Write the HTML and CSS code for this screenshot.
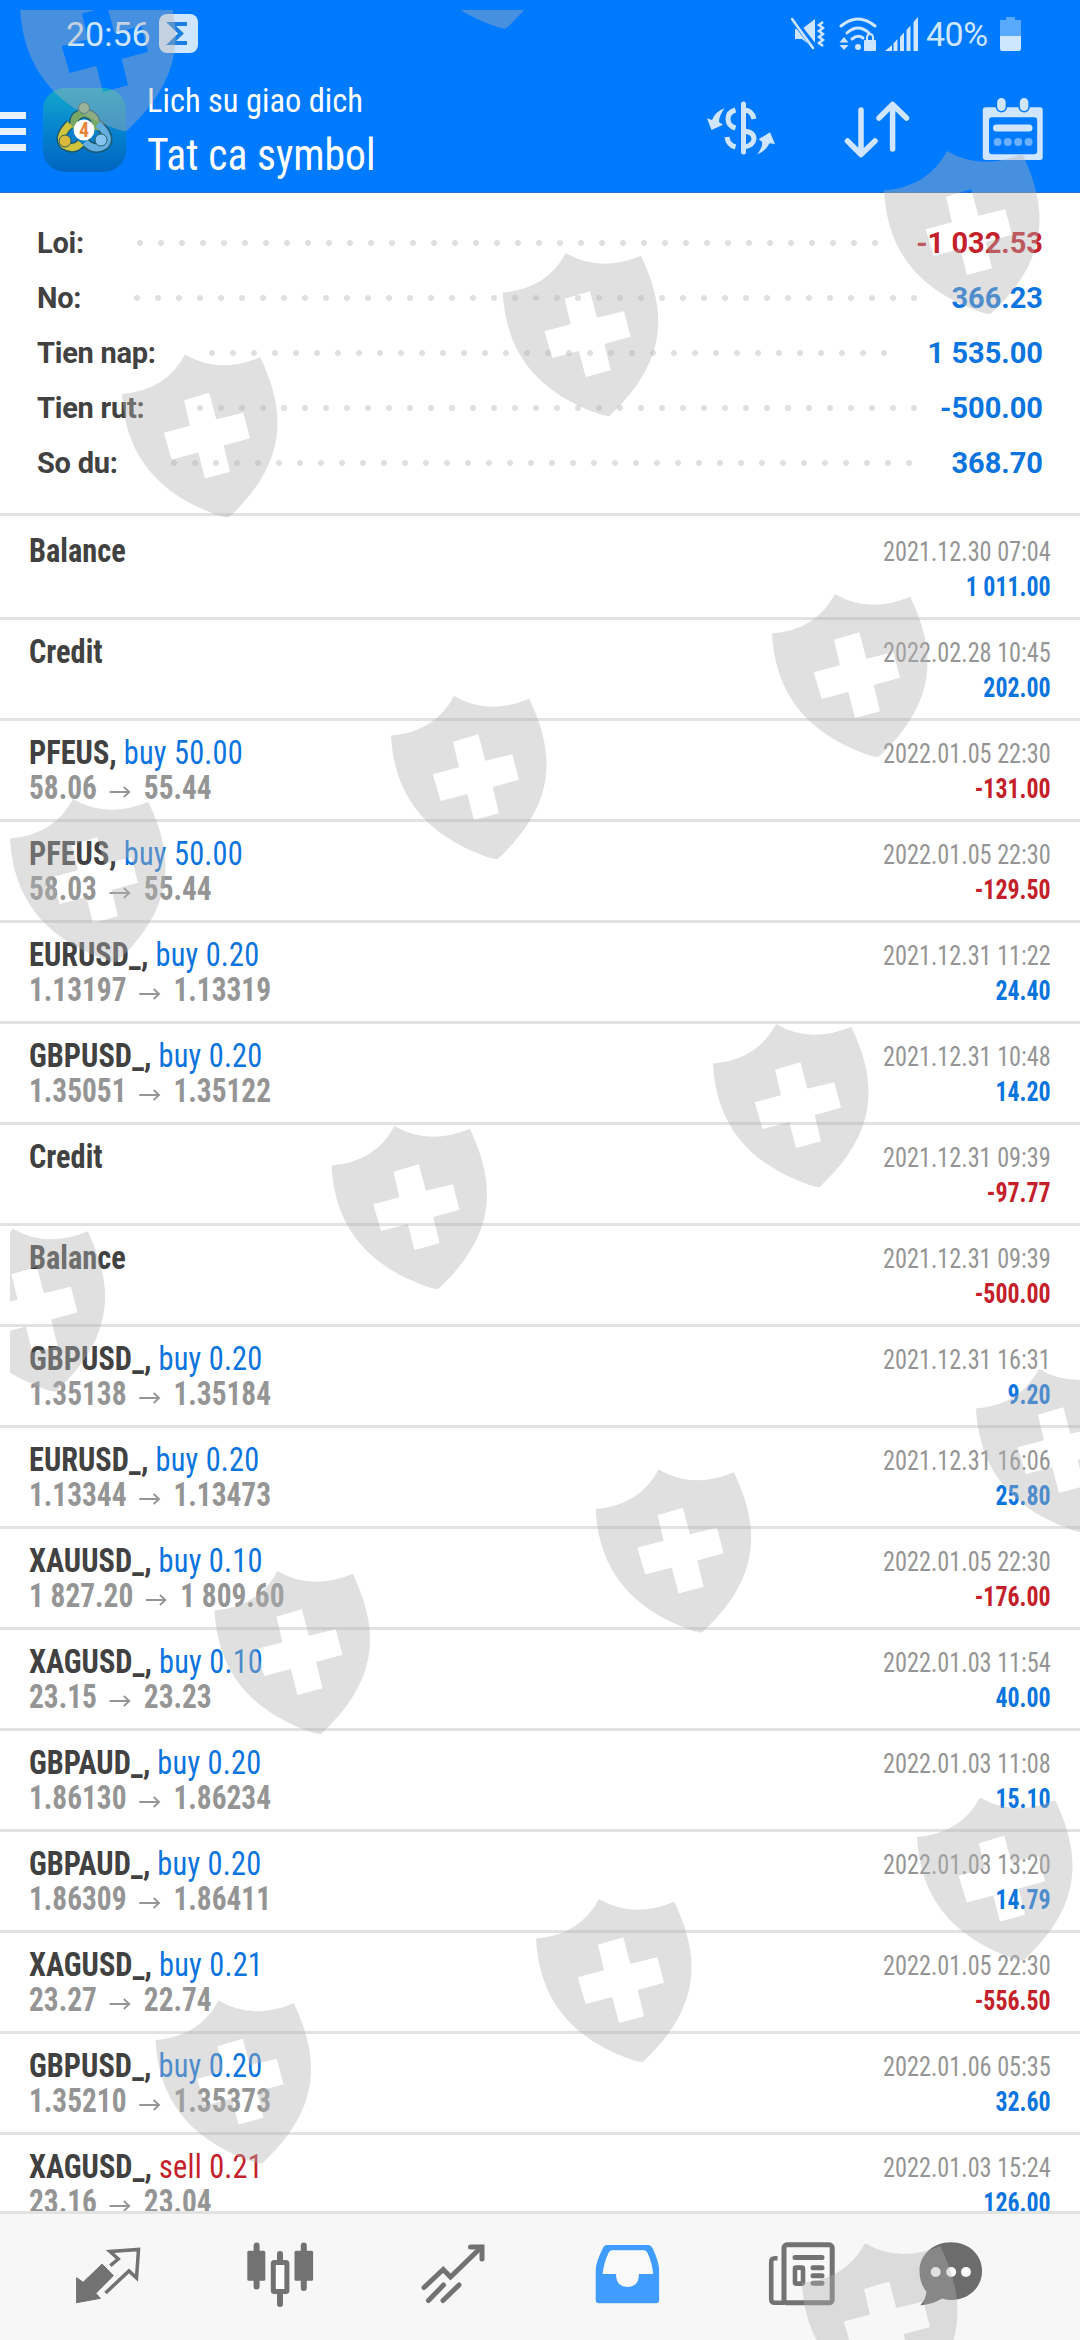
FILE: index.html
```html
<!DOCTYPE html>
<html lang="vi">
<head>
  <meta charset="UTF-8" />
  <meta name="viewport" content="width=device-width, initial-scale=1.0"/>
  <title>Lich su giao dich</title>
  <link rel="stylesheet" href="styles.css">
</head>
<body>
  <div class="screen">
    <header class="header">
      <div class="status-bar">
        <span class="time">20:56</span>
        <svg class="badge" viewBox="0 0 39 39">
          <rect width="39" height="39" rx="8" fill="#cfe6ff"/>
          <path d="M28 10H12L22 19.500L12 29H28" fill="none" stroke="#1a7fe0" stroke-width="4"/>
        </svg>
        <div class="status-right">
          <svg class="mute" viewBox="0 0 34 34">
            <path d="M4 12H11L24 2V32L11 22H4Z" fill="#cfe6ff"/>
            <path d="M0 0L26 33" stroke="#007aff" stroke-width="6"/>
            <path d="M1 2L22 31" stroke="#cfe6ff" stroke-width="2.500" stroke-linecap="round"/>
            <path d="M32 5L28 8L32 11L28 14L32 17L28 20L32 23L28 26L32 29" fill="none" stroke="#cfe6ff" stroke-width="2.500"/>
          </svg>
          <svg class="wifi" viewBox="0 0 38 34">
            <g fill="none" stroke="#cfe6ff" stroke-width="3" stroke-linecap="round">
              <path d="M2 9Q19 -5 36 9"/>
              <path d="M8 16Q19 6 30 16"/>
              <path d="M13 22Q19 17 24 21"/>
            </g>
            <circle cx="19" cy="30" r="3" fill="#cfe6ff"/>
            <path d="M5 20L9.500 25.500H0.500ZM5 33L0.500 28H9.500Z" fill="#cfe6ff"/>
            <rect x="25" y="23" width="12" height="11" rx="1" fill="#cfe6ff"/>
            <path d="M28 24V20.500A3 3.500 0 0 1 34 20.500V24" fill="none" stroke="#cfe6ff" stroke-width="2"/>
          </svg>
          <svg class="signal" viewBox="0 0 33 34">
            <path d="M0 34L7 28V34ZM8.500 26.500L12.500 22V34H8.500ZM15 20L19 15.500V34H15ZM21.500 13L25.500 8.500V34H21.500ZM28.500 5L33 0V34H28.500Z" fill="#cfe6ff"/>
          </svg>
          <span class="percent">40%</span>
          <svg class="battery" viewBox="0 0 21 34">
            <path d="M6 0H15V3H21V19H0V3H6Z" fill="#59a9ff"/>
            <path d="M0 19H21V31.500Q21 34 19 34H2Q0 34 0 31.500Z" fill="#cfe6ff"/>
          </svg>
        </div>
      </div>
      <div class="toolbar">
        <div class="menu"><i></i><i></i><i></i></div>
        <svg class="app-icon" viewBox="0 0 83 84">
          <defs>
            <linearGradient id="appBg" x1="0" y1="0" x2="0" y2="1">
              <stop offset="0" stop-color="#12a8cc"/>
              <stop offset=".5" stop-color="#0683cf"/>
              <stop offset="1" stop-color="#0064c0"/>
            </linearGradient>
          </defs>
          <rect width="83" height="84" rx="22" fill="url(#appBg)"/>
          <!-- three figures holding hands in a ring -->
          <g fill="none" stroke="#1d5a70" stroke-width="10">
            <path d="M31 40Q29 27 41 25Q55 27 53 42"/>
            <path d="M27 36Q14 49 21 57Q31 63 38 55"/>
            <path d="M55 36Q69 49 62 57Q51 64 42 54"/>
          </g>
          <g fill="none" stroke-width="7">
            <path d="M31 40Q29 27 41 25Q55 27 53 42" stroke="#79a864"/>
            <path d="M27 36Q14 49 21 57Q31 63 38 55" stroke="#cfc53c"/>
            <path d="M55 36Q69 49 62 57Q51 64 42 54" stroke="#62aede"/>
          </g>
          <g stroke="#2c5f66" stroke-width="1">
            <circle cx="41" cy="20" r="5.500" fill="#8db58a"/>
            <circle cx="22" cy="53" r="6" fill="#d8b93c"/>
            <circle cx="58" cy="52" r="6" fill="#86c4f2"/>
          </g>
          <circle cx="41" cy="42" r="10.500" fill="#fff"/>
          <text x="41" y="49" text-anchor="middle" class="app-num">4</text>
        </svg>
        <div class="titles">
          <div class="title">Lich su giao dich</div>
          <div class="subtitle">Tat ca symbol</div>
        </div>
        <div class="actions">
          <svg viewBox="0 0 70 70">
            <g fill="none" stroke="#d0e6ff" stroke-width="5">
              <path d="M37.500 9V57" stroke-linecap="round"/>
              <path d="M29.500 15Q22 17 22 24Q22 31 29.500 33"/>
              <path d="M38 15Q46 15 48 24"/>
              <path d="M21 42Q22 50 29.500 52"/>
              <path d="M38 36Q48 37 48 44Q47 51 38 52"/>
            </g>
            <path d="M18.500 13.300Q13 21 13 27L17 29.700L5.500 35L1 23.300L6 25Q10 16 18.500 13.300ZM51.300 59.300Q57 52 56 46.700L52.600 44.300L64 37.300L69 49L63.600 48.300Q60 56 51.300 59.300Z" fill="#d0e6ff"/>
          </svg>
          <svg viewBox="0 0 70 70">
            <g fill="none" stroke="#d0e6ff" stroke-width="5.500" stroke-linecap="round" stroke-linejoin="round">
              <path d="M19 15V59M5.500 46L19 59.500L33 46"/>
              <path d="M50.600 54V10M37 23L50.600 9.500L64.500 23"/>
            </g>
          </svg>
          <svg viewBox="0 0 70 70">
            <path fill-rule="evenodd" d="M8 12.300H62Q64.700 12.300 64.700 15V62Q64.700 65 62 65H8Q4.800 65 4.800 62V15Q4.800 12.300 8 12.300ZM14 22.300Q11 22.300 11 25.300V56.300Q11 59.300 14 59.300H56Q59.200 59.300 59.200 56.300V25.300Q59.200 22.300 56 22.300Z" fill="#d0e6ff"/>
            <rect x="18.400" y="2.300" width="10" height="14.500" rx="5" fill="#d0e6ff" stroke="#007aff" stroke-width="1.500"/>
            <rect x="41.100" y="2.300" width="10" height="14.500" rx="5" fill="#d0e6ff" stroke="#007aff" stroke-width="1.500"/>
            <path d="M18.500 33H51" stroke="#d0e6ff" stroke-width="7" stroke-linecap="round"/>
            <g fill="#6cb1ff">
              <circle cx="19.600" cy="47" r="4"/><circle cx="29.800" cy="47" r="4"/><circle cx="40.200" cy="47" r="4"/><circle cx="50.600" cy="47" r="4"/>
            </g>
          </svg>
        </div>
      </div>
    </header>

    <section class="summary" id="summary"></section>

    <main class="history" id="history"></main>

    <nav class="tabs">
      <svg viewBox="0 0 70 70">
        <path d="M29.100 24L40.400 35.700L22.900 53.300L27.400 58.300L3.600 62.700V37.700L10.100 42.300Z" fill="#727272" stroke="#727272" stroke-width="1" stroke-linejoin="round"/>
        <path d="M37.300 25.700L45.300 19L37 11.500L65.500 9.500L63.500 38L56 31L32.500 53" fill="none" stroke="#727272" stroke-width="3.500"/>
      </svg>
      <svg viewBox="0 0 70 70">
        <g fill="#727272">
          <rect x="1.300" y="10.700" width="18" height="30" rx="1.500"/>
          <rect x="48.500" y="10.700" width="18.600" height="30" rx="1.500"/>
        </g>
        <path d="M10.600 5.500V46.500M57.800 5.500V48M34 14V20M34 54V64" stroke="#727272" stroke-width="6" stroke-linecap="round"/>
        <rect x="27.300" y="22.500" width="13.600" height="29" rx="1" fill="#fff" stroke="#727272" stroke-width="5"/>
      </svg>
      <svg viewBox="0 0 70 70">
        <g fill="none" stroke="#727272" stroke-width="5" stroke-linecap="round">
          <path d="M5 47.500L24.200 29.500L31.500 37L62 7.500"/>
          <path d="M51.500 7H63V19"/>
          <path d="M9.500 60.500L24.500 45M24 60.500L40 45"/>
        </g>
      </svg>
      <svg viewBox="0 0 70 70">
        <path d="M14 5H55Q58 5 60 9Q66 22 66.100 30V60Q66.100 63.300 63 63.300H6Q2.700 63.300 2.700 60V30Q3 22 9.500 9Q11 5 14 5Z" fill="#409cff"/>
        <path d="M19 10.300H51Q53.500 10.300 54.500 13Q59 22 60.200 34H45.800V36.500Q45 47 34.500 47Q24 47 23.100 36.500V34H9.600Q11 22 15.500 13Q16.500 10.300 19 10.300Z" fill="#f9f9f9"/>
      </svg>
      <svg viewBox="0 0 70 70">
        <rect x="18" y="4.800" width="48.200" height="58" rx="3" fill="none" stroke="#727272" stroke-width="5"/>
        <path d="M11.500 18.300H9Q5.200 18.300 5.200 22V59Q5.200 62.800 9 62.800H18" fill="none" stroke="#727272" stroke-width="4.600"/>
        <path d="M29 17.500H56M47 27.700H56M47 35.700H56M47 43.300H56" stroke="#727272" stroke-width="5" stroke-linecap="round"/>
        <rect x="29" y="27.600" width="8" height="16" rx="1" fill="#fff" stroke="#727272" stroke-width="4.600"/>
      </svg>
      <svg viewBox="0 0 70 70">
        <path d="M35 2.300C53 2.300 66.100 15 66.100 31C66.100 47 53 60 35 60Q31 60 26 58.500Q17 64.500 4.200 65.300Q10 59 10.400 51.700Q3.500 43 3.500 31C3.500 15 17 2.300 35 2.300Z" fill="#6c6c6c"/>
        <g fill="#fff"><circle cx="19.700" cy="32" r="5"/><circle cx="35.200" cy="32" r="5"/><circle cx="50" cy="32" r="5"/></g>
      </svg>
    </nav>

    <!-- shield watermark over the whole screen -->
    <svg class="watermark" viewBox="0 0 1080 2340">
      <defs>
        <clipPath id="frame"><rect x="10" y="10" width="1070" height="2330"/></clipPath>
        <path id="shield" fill-rule="evenodd" d="M0 0Q34 20 75.300 2.700C100 55 105 106 43.700 163Q39 163.500 28 159C-30 137 -60 98 -63 39.500Q-19 36 0 0ZM-1 45.700L24.300 38.300L31.300 64.700L58.300 58.300L65 83.700L38.700 91L45 117.300L20 124L13.300 98L-13.300 105L-21.300 78.300L5 71.300Z"/>
      </defs>
      <g id="shields" clip-path="url(#frame)"></g>
    </svg>
  </div>

  <script>
    // dots: how many leader dots fit between the label and the value
    const summary = [
      { label: "Loi:", value: "-1 032.53", dots: 36, loss: true },
      { label: "No:", value: "366.23", dots: 38 },
      { label: "Tien nap:", value: "1 535.00", dots: 33 },
      { label: "Tien rut:", value: "-500.00", dots: 35 },
      { label: "So du:", value: "368.70", dots: 36 }
    ];

    // name, side + volume, open price, close price, time, profit
    const history = [
      ["Balance", "", "", "", "2021.12.30 07:04", "1 011.00"],
      ["Credit", "", "", "", "2022.02.28 10:45", "202.00"],
      ["PFEUS", "buy 50.00", "58.06", "55.44", "2022.01.05 22:30", "-131.00"],
      ["PFEUS", "buy 50.00", "58.03", "55.44", "2022.01.05 22:30", "-129.50"],
      ["EURUSD_", "buy 0.20", "1.13197", "1.13319", "2021.12.31 11:22", "24.40"],
      ["GBPUSD_", "buy 0.20", "1.35051", "1.35122", "2021.12.31 10:48", "14.20"],
      ["Credit", "", "", "", "2021.12.31 09:39", "-97.77"],
      ["Balance", "", "", "", "2021.12.31 09:39", "-500.00"],
      ["GBPUSD_", "buy 0.20", "1.35138", "1.35184", "2021.12.31 16:31", "9.20"],
      ["EURUSD_", "buy 0.20", "1.13344", "1.13473", "2021.12.31 16:06", "25.80"],
      ["XAUUSD_", "buy 0.10", "1 827.20", "1 809.60", "2022.01.05 22:30", "-176.00"],
      ["XAGUSD_", "buy 0.10", "23.15", "23.23", "2022.01.03 11:54", "40.00"],
      ["GBPAUD_", "buy 0.20", "1.86130", "1.86234", "2022.01.03 11:08", "15.10"],
      ["GBPAUD_", "buy 0.20", "1.86309", "1.86411", "2022.01.03 13:20", "14.79"],
      ["XAGUSD_", "buy 0.21", "23.27", "22.74", "2022.01.05 22:30", "-556.50"],
      ["GBPUSD_", "buy 0.20", "1.35210", "1.35373", "2022.01.06 05:35", "32.60"],
      ["XAGUSD_", "sell 0.21", "23.16", "23.04", "2022.01.03 15:24", "126.00"]
    ];

    const shields = [
      [83, -32], [462.5, -134.6],
      [185, 354.5], [565.7, 253], [947, 151],
      [73, 799], [454, 696], [835, 594],
      [12.5, 1228.5], [394.5, 1126], [776, 1024],
      [277.5, 1571], [658.6, 1469.5], [1039, 1369],
      [218.5, 2000.5], [599, 1899], [980, 1797.5],
      [865, 2243.3]
    ];

    document.getElementById("summary").innerHTML = summary.map(s => `
      <div class="sum-row">
        <span class="sum-label">${s.label}</span>
        <span class="leader" style="width:${s.dots * 21}px"></span>
        <span class="sum-value ${s.loss ? "red" : "blue"}">${s.value}</span>
      </div>`).join("");

    document.getElementById("history").innerHTML = history.map(([name, order, open, close, time, profit]) => `
      <div class="deal">
        <div class="deal-left">
          <div class="deal-name">${name}${order ? `, <span class="${order.startsWith("sell") ? "red" : "blue"}">${order}</span>` : ""}</div>
          ${open ? `<div class="deal-price">${open}<svg class="arrow" viewBox="0 0 24 12"><path d="M0 6H22M16 1L22 6L16 11" fill="none" stroke="#959595" stroke-width="2"/></svg>${close}</div>` : ""}
        </div>
        <div class="deal-right">
          <div class="deal-time">${time}</div>
          <div class="deal-profit ${profit.startsWith("-") ? "red" : "blue"}">${profit}</div>
        </div>
      </div>`).join("");

    document.getElementById("shields").innerHTML = shields
      .map(([x, y]) => `<use href="#shield" x="${x}" y="${y}"/>`).join("");
  </script>
</body>
</html>
```
FILE: styles.css
```css
body {
  margin: 0;
  background: #fff;
  color: #414141;
  font-family: "Roboto Condensed", Roboto, sans-serif;
  font-stretch: 75%;
}
svg {
  display: block;
  flex: none;
}
.screen {
  position: relative;
  width: 1080px;
  height: 2340px;
  display: flex;
  flex-direction: column;
  overflow: hidden;
}
.blue {
  color: #0c74de;
}
.red {
  color: #c4202a;
}

/* header */
.header {
  height: 193px;
  background: #007aff;
  border-bottom: 1px solid #2a6fc0;
  box-sizing: border-box;
  flex: none;
}
.status-bar {
  display: flex;
  align-items: center;
  height: 67px;
  padding: 0 59px 0 66px;
  color: #cfe6ff;
  font-family: Roboto, sans-serif;
  font-stretch: 100%;
  font-size: 34px;
}
.time {
  width: 93px;
}
.badge {
  width: 39px;
  height: 39px;
}
.status-right {
  display: flex;
  align-items: center;
  margin-left: auto;
}
.mute {
  width: 34px;
  height: 34px;
  margin-right: 14px;
}
.wifi {
  width: 38px;
  height: 34px;
  margin-right: 8px;
}
.signal {
  width: 33px;
  height: 34px;
  margin-right: 8px;
}
.percent {
  width: 74px;
  letter-spacing: -0.5px;
}
.battery {
  width: 21px;
  height: 34px;
}
.toolbar {
  display: flex;
  align-items: center;
  height: 125px;
  color: #fff;
}
.menu {
  width: 26px;
  display: flex;
  flex-direction: column;
  gap: 9px;
  margin: 4px 17px 0 0;
}
.menu i {
  height: 7px;
  background: #e6f2ff;
}
.app-icon {
  width: 83px;
  height: 84px;
  margin-right: 21px;
}
.app-num {
  font-size: 20px;
  font-weight: 700;
  fill: #e8853a;
}
/* type is drawn a little narrower than the condensed face */
.titles {
  white-space: nowrap;
  padding-top: 1px;
}
.title {
  font-size: 34px;
  line-height: 50px;
  transform: scaleX(0.955);
  transform-origin: left;
}
.subtitle {
  font-size: 45px;
  line-height: 60px;
  transform: scaleX(0.925);
  transform-origin: left;
}
.actions {
  display: flex;
  gap: 66px;
  margin: 1px 32px 0 auto;
}
.actions svg {
  width: 70px;
  height: 70px;
}

/* account totals */
.summary {
  height: 323px;
  box-sizing: border-box;
  padding: 22px 37px 0;
  border-bottom: 3px solid #e2e2e2;
  margin-bottom: 3px;
  flex: none;
}
.sum-row {
  display: flex;
  align-items: center;
  height: 55px;
  font-family: Roboto, sans-serif;
  font-stretch: 100%;
  font-size: 29px;
}
.sum-label {
  font-weight: 700;
  letter-spacing: -0.25px;
}
.leader {
  height: 6px;
  margin-left: 53px;
  background: radial-gradient(circle at 3px 3px, #e0e0e0 2.600px, transparent 3.400px) 0 0 / 21px 6px;
}
.sum-value {
  margin-left: auto;
  font-weight: 700;
}

/* deals */
.history {
  flex: 1;
  min-height: 0;
  overflow: hidden;
}
.deal {
  display: flex;
  justify-content: space-between;
  height: 101px;
  box-sizing: border-box;
  padding: 15px 29px 0;
  border-bottom: 3px solid #e2e2e2;
  white-space: nowrap;
}
.deal-name {
  font-size: 32.5px;
  line-height: 35px;
  font-weight: 700;
  transform: scaleX(0.934);
  transform-origin: left;
}
.deal-name span {
  font-weight: 400;
  letter-spacing: 0.25px;
}
.deal-price {
  display: flex;
  align-items: center;
  font-size: 32.5px;
  line-height: 35px;
  font-weight: 700;
  color: #959595;
  transform: scaleX(0.903);
  transform-origin: left;
}
.arrow {
  width: 24px;
  height: 12px;
  margin: 6px 14px 0;
}
.deal-right {
  text-align: right;
  padding-top: 1px;
}
.deal-time {
  font-size: 27px;
  line-height: 35px;
  color: #959595;
  transform: scaleX(0.898);
  transform-origin: right;
}
.deal-profit {
  font-size: 27px;
  line-height: 35px;
  font-weight: 700;
  transform: scaleX(0.885);
  transform-origin: right;
}

/* bottom tabs */
.tabs {
  display: grid;
  grid-template-columns: repeat(5, 173.400px) 126px;
  justify-items: center;
  padding: 26px 0 0 21px;
  height: 129px;
  box-sizing: border-box;
  border-top: 3px solid #e2e2e2;
  background: #f7f7f7;
  flex: none;
}
.tabs svg {
  width: 70px;
  height: 70px;
}

.watermark {
  position: absolute;
  left: 0;
  top: 0;
  width: 1080px;
  height: 2340px;
  fill: rgba(177, 177, 177, 0.4);
  pointer-events: none;
}
```
